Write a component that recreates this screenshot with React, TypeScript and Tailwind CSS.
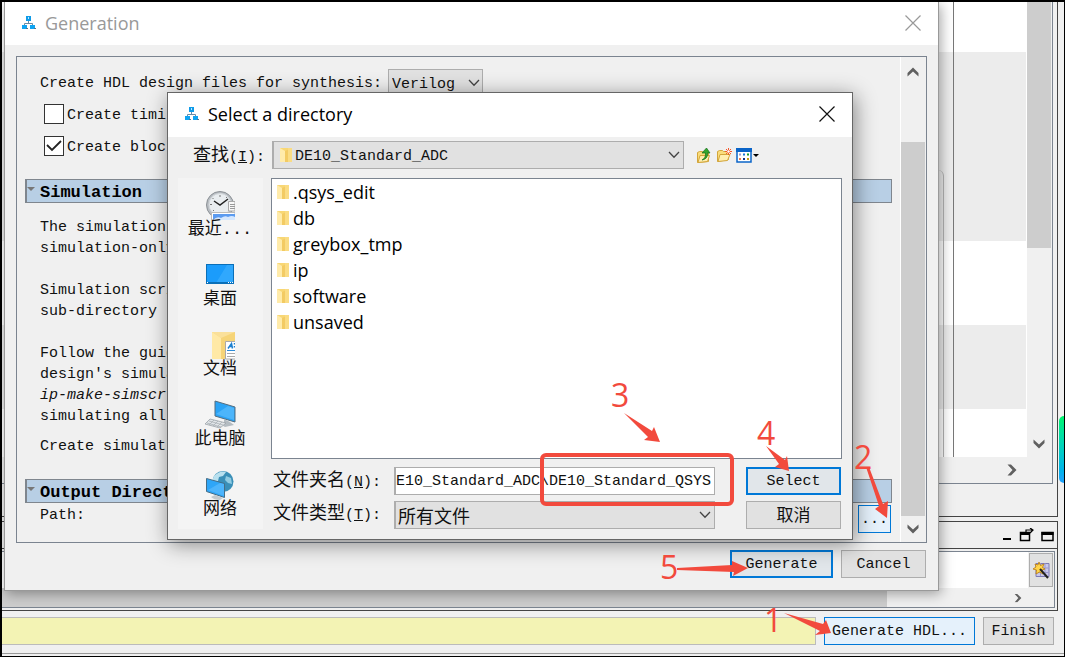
import type { ReactNode } from 'react';

const CJK = "font-['Noto_Sans_CJK_SC',sans-serif]";
const MONO = "font-['Liberation_Mono','Noto_Sans_CJK_SC',monospace]";
const MONO_TEXT = `${MONO} text-[15px] leading-[21px]`;

const folders = ['.qsys_edit', 'db', 'greybox_tmp', 'ip', 'software', 'unsaved'];

function QsysIcon() {
    return (
        <svg width="14" height="14" viewBox="0 0 14 14" className="shrink-0">
            <path d="M6.500 4v4M2.500 10V7.500h8V10" stroke="#6b8ba4" fill="none" />
            <rect x="4" y="0" width="5" height="5" fill="#0f9be8" />
            <rect x="6" y="1" width="1" height="2" fill="#bfe6ff" />
            <rect x="0" y="9" width="5" height="4" fill="#0fa4f2" />
            <rect x="8" y="9" width="5" height="4" fill="#0fa4f2" />
            <path d="M4 12.500h2M12 12.500h2" stroke="#58748a" />
        </svg>
    );
}

function CloseIcon({ color }: { color: string }) {
    return (
        <svg width="16" height="16" viewBox="0 0 16 16" stroke={color} strokeWidth="1.2">
            <path d="M.5 .5l15 15M15.500 .5l-15 15" />
        </svg>
    );
}

function Chevron({ className = '' }: { className?: string }) {
    return (
        <svg width="12" height="8" viewBox="0 0 12 8" className={className} fill="none" stroke="#444" strokeWidth="1.300">
            <path d="M1 1l5 5.200 5-5.200" />
        </svg>
    );
}

function ScrollArrow({ className = '' }: { className?: string }) {
    return (
        <svg width="12" height="10" viewBox="0 0 12 10" className={className} fill="#606060">
            <path d="M.5 .5v3.500L6 9.500 11.500 4V.5L6 5.500z" />
        </svg>
    );
}

function FolderIcon() {
    return (
        <svg width="12" height="14" viewBox="0 0 12 14" className="shrink-0">
            <rect width="12" height="14" fill="#f8d775" />
            <path d="M5 3L12 0v14H5z" fill="#f3cb63" />
            <path d="M8 0h4v14H8z" fill="#fadc84" />
            <path d="M0 0l5 3v11H0z" fill="#ffebaa" />
        </svg>
    );
}

function RecentIcon() {
    return (
        <svg width="30" height="30" viewBox="0 0 30 30">
            <circle cx="15" cy="15" r="13.500" fill="#b8bdc2" stroke="#8c9196" />
            <circle cx="15" cy="14.500" r="11" fill="#e9edf0" stroke="#d2d6da" />
            <path d="M15 5v2M5 14.500h2M7.500 8l1 1M22 7l-1 1M8 21l1-1" stroke="#777" />
            <path d="M9 11l6 4 8-6" stroke="#222" strokeWidth="1.500" fill="none" />
            <path d="M23.500 11.500H30V21h-6.500z" fill="#f8f8f8" stroke="#aaa" />
            <path d="M25 14.500h5M25 16.500h5M25 18.500h5" stroke="#999" />
            <path d="M6.500 22.500H30V30H6.500z" fill="#fff" stroke="#bbb" />
            <path d="M8 24h22v6H8z" fill="#5b9bf0" />
            <path d="M8 30q4-4 8-2 4-3 7-1 4-2 7 0v3z" fill="#d5e7fd" />
        </svg>
    );
}

function DesktopIcon() {
    return (
        <svg width="30" height="30" viewBox="0 0 30 30">
            <rect x="1.500" y="4.500" width="27" height="19" fill="#1b9cfb" stroke="#0a6fb8" />
            <path d="M11 23L22 5h6v18z" fill="#3fb0ff" opacity=".6" />
            <path d="M2 22.500h26" stroke="#0a6fb8" />
            <path d="M2 22.500h1M23 22.500h1M25 22.500h1M27 22.500h1" stroke="#fff" />
        </svg>
    );
}

function DocumentsIcon() {
    return (
        <svg width="30" height="30" viewBox="0 0 30 30">
            <path d="M7 2h24v27H7z" fill="#f6d477" />
            <path d="M16 8l14-6H7z" fill="#fae09a" />
            <path d="M7 2l9 6v21H7z" fill="#ffe9a6" />
            <path d="M20.500 11.500H31V29H20.500z" fill="#fff" stroke="#aaa" />
            <path d="M23 18.500l3.500-5 1 5M24 16.500h3M29.500 13v1.500M29.500 16v1.500" stroke="#1c7fd0" strokeWidth="1.500" fill="none" />
            <path d="M22 20.500h8" stroke="#2b8bd8" />
            <path d="M22 23.500h8M22 26.500h8" stroke="#aaa" />
        </svg>
    );
}

function ComputerIcon() {
    return (
        <svg width="32" height="30" viewBox="0 0 32 30">
            <path d="M11 1l20 6v15l-20-6z" fill="#2ba3f5" stroke="#546d7e" />
            <path d="M12 14L24 6l6 2v12z" fill="#62c2ff" opacity=".6" />
            <path d="M20 19v4l-4 1 5 3 9-2-4-3z" fill="#b4bcc2" />
            <path d="M6 19l16 4-6 5-15-4z" fill="#e1e5e8" stroke="#9aa2a8" strokeWidth=".8" />
            <path d="M5 21l14 4M3 23l14 4M10 20l-5 5M14 21l-5 5M18 22l-5 5" stroke="#a9b0b5" strokeWidth=".8" />
        </svg>
    );
}

function NetworkIcon() {
    return (
        <svg width="30" height="30" viewBox="0 0 30 30">
            <circle cx="18" cy="11.500" r="10.500" fill="#3a8fb7" />
            <path d="M9 6q6-6 12-4l-3 4-4 1-1 4-5 1q-1-3 1-6z" fill="#b9e0ee" />
            <path d="M21 6l5 2 1 6-4-1-3-3z" fill="#8fcbe2" />
            <path d="M1.500 8.500l18 5v14l-18-6z" fill="#2ea6f8" stroke="#456d86" />
            <path d="M3 20L15 13l4 1v12z" fill="#6cc4ff" opacity=".5" />
            <path d="M6 27l4-2 8 3-3 2q-6 0-9-3z" fill="#c3c9cd" />
        </svg>
    );
}

const places: { label: string; icon: ReactNode }[] = [
    { label: '最近...', icon: <RecentIcon /> },
    { label: '桌面', icon: <DesktopIcon /> },
    { label: '文档', icon: <DocumentsIcon /> },
    { label: '此电脑', icon: <ComputerIcon /> },
    { label: '网络', icon: <NetworkIcon /> },
];

function UpFolderIcon() {
    return (
        <svg width="16" height="16" viewBox="0 0 16 16">
            <path d="M1.500 5.500l2-1h3l1 1h5v9l-11 1z" fill="#f9dc7c" stroke="#d3a63b" />
            <path d="M4 8.500h9.500l-2 6-9.500 1z" fill="#ffeeb0" stroke="#d3a63b" />
            <path d="M6 13q4-2 3.500-7H6L10.500 1 14 6h-2.500q.5 6-5.500 7z" fill="#35a52e" stroke="#14701a" strokeWidth=".7" />
        </svg>
    );
}

function NewFolderIcon() {
    return (
        <svg width="16" height="16" viewBox="0 0 16 16">
            <path d="M1.500 4.500l2-1h3l1 1h5v8l-11 2z" fill="#f9dc7c" stroke="#d3a63b" />
            <path d="M4 7.500h10l-2.500 6-9.500 1z" fill="#ffeeb0" stroke="#d3a63b" />
            <path d="M12.500 1v7M9 4.500h7M10 2l5 5M15 2l-5 5" stroke="#f5562b" />
            <circle cx="12.500" cy="4.500" r="1.200" fill="#fff" />
        </svg>
    );
}

function ViewMenuIcon() {
    return (
        <svg width="23" height="16" viewBox="0 0 23 16">
            <rect x="1" y="2" width="14" height="13" fill="#fff" stroke="#0a64c8" strokeWidth="1.500" />
            <path d="M0 1h16v4H0z" fill="#0a64c8" />
            <path d="M3 7.500h2" stroke="#9a9ad0" strokeWidth="2" />
            <path d="M7 7.500h2" stroke="#1877d8" strokeWidth="2" />
            <path d="M11 7.500h2" stroke="#159a25" strokeWidth="2" />
            <path d="M3 12h2" stroke="#f07a4a" strokeWidth="2" />
            <path d="M7 12h2" stroke="#10328c" strokeWidth="2" />
            <path d="M11 12h2" stroke="#c49a10" strokeWidth="2" />
            <path d="M17 7h6l-3 3z" fill="#000" />
        </svg>
    );
}

function WandIcon() {
    return (
        <svg width="17" height="17" viewBox="0 0 17 17">
            <path d="M3 1.500h13v13H3z" fill="#c9c8ea" stroke="#7c7ab5" />
            <path d="M3 6h13M3 10.500h13M7.500 1v13M12 1v13" stroke="#9c9ace" />
            <path d="M6 0l1.500 3.500L11 2 9.500 5.500 12 7 9 8l1 4-3.500-2L3 12l.5-4L0 7l3-2-1-3 3 1z" fill="#ffd54a" stroke="#b87a10" strokeWidth=".8" />
            <path d="M7 7l8 9" stroke="#222" strokeWidth="2" />
        </svg>
    );
}

function TitleBar({ title, active }: { title: string; active: boolean }) {
    return (
        <header className={`flex items-center bg-white px-[17px] pb-[2px] ${active ? 'h-[44px]' : 'h-[43px]'}`}>
            <QsysIcon />
            <h2 className={`ml-[9px] flex-1 font-['Open_Sans',sans-serif] text-[18px] leading-6 ${active ? 'text-black' : 'text-[#999]'}`}>
                {title}
            </h2>
            <button type="button" aria-label={`Close ${title}`}>
                <CloseIcon color={active ? '#111' : '#999'} />
            </button>
        </header>
    );
}

function SectionHeader({ title }: { title: string }) {
    return (
        <h3 className={`flex h-6 items-center overflow-hidden border border-l-2 border-[#7f868e] bg-[#b8cfe5] text-[17px] leading-5 font-bold whitespace-nowrap text-black ${MONO}`}>
            <svg width="8" height="4" viewBox="0 0 8 4" className="mb-1 shrink-0">
                <path d="M0 0h8L4 4z" fill="#777" />
            </svg>
            <span className="ml-[5px] pt-1">{title}</span>
        </h3>
    );
}

function Check({ id, label, checked }: { id: string; label: string; checked: boolean }) {
    return (
        <div className="flex h-8 items-center pl-[19px]">
            <span className="relative flex">
                <input id={id} type="checkbox" defaultChecked={checked} className="peer h-[20px] w-[20px] appearance-none border border-[#333] bg-white" />
                <svg width="16" height="12" viewBox="0 0 16 12" className="pointer-events-none absolute top-1 left-[2px] hidden peer-checked:block">
                    <path d="M1 5l5 5 9-9" fill="none" stroke="#222" strokeWidth="1.800" />
                </svg>
            </span>
            <label htmlFor={id} className="ml-[3px] pt-[2px] whitespace-nowrap">{label}</label>
        </div>
    );
}

function MainWindow() {
    return (
        <main className="flex min-h-screen flex-col border-t-2 border-r border-b border-l-2 border-black bg-[#f0f0f0]">
            <section className="mr-[6px] flex flex-1 flex-col border-r border-b border-[#444] pr-1 pb-8">
                <div className="flex flex-1 flex-col border-r border-b border-[#7b8490]">
                    <div className="flex flex-1">
                        <div className="flex flex-1 justify-end bg-[linear-gradient(#fff_0_50px,#ececec_50px_239px,#fff_239px_323px,#ececec_323px_407px,#fff_407px)]">
                            <div className="mt-[168px] w-[10px] rounded-tr-md border-r border-[#b4b4b4]" />
                            <div className="mr-[72px] w-[10px] border-r border-[#777]" />
                        </div>
                        <div className="flex w-[26px] flex-col justify-between border-l border-white">
                            <div className="mr-px h-[246px] bg-[#cdcdcd]" />
                            <ScrollArrow className="mr-px mb-2 self-center" />
                        </div>
                    </div>
                    <div className="flex h-[26px] items-center justify-end pr-[34px]">
                        <ScrollArrow className="-rotate-90" />
                    </div>
                </div>
            </section>

            <section className="mt-1 mr-[6px] border-t border-r border-b border-[#444] pb-[2px]">
                <div className="flex h-[27px] items-center justify-end border-b border-[#444] pr-[3px]">
                    <svg width="52" height="14" viewBox="0 0 52 14" fill="none" stroke="#000" strokeWidth="1.500">
                        <path d="M1 11h8" strokeWidth="2" />
                        <path d="M18.500 4.500h9v8h-9z" />
                        <path d="M18 5.500h10" strokeWidth="3" />
                        <path d="M24 4V2h6M28 0l3 2-3 3" strokeWidth="1.200" />
                        <path d="M40 4.500h11v8H40z" />
                        <path d="M39.500 5.500h12" strokeWidth="3" />
                    </svg>
                </div>
                <div className="mt-[2px] mr-[2px] border-t border-r border-b border-[#7b8490]">
                    <div className="flex h-[36px]">
                        <div className="flex-1 bg-white" />
                        <button type="button" aria-label="Edit table" className="m-px flex w-[24px] items-center justify-center border border-[#adadad] bg-[#e1e1e1]">
                            <WandIcon />
                        </button>
                    </div>
                    <div className="flex h-[19px] items-center pr-[30px]">
                        <div className="h-full flex-1 bg-[#cdcdcd]" />
                        <ScrollArrow className="ml-[125px] -rotate-90 scale-75" />
                    </div>
                </div>
            </section>

            <footer className={`mr-[10px] mb-[2px] flex h-[43px] items-start gap-2 pt-[6px] ${MONO_TEXT}`}>
                <div className="h-[28px] flex-1 border-y border-r border-[#bbb] bg-[#f3f3b4]" />
                <button type="button" className="h-[28px] w-[151px] border border-[#0078d7] bg-[#e5f1fb]">Generate HDL...</button>
                <button type="button" className="h-[28px] w-[71px] border border-[#adadad] bg-[#e1e1e1]">Finish</button>
            </footer>
            <div className="-mt-[3px] mb-[2px] border-t border-[#999]" />
        </main>
    );
}

function GenerationWindow() {
    return (
        <section className={`absolute top-[2px] left-1 w-[935px] border-r border-b border-l border-[#999] bg-[#f0f0f0] shadow-[2px_3px_12px_rgba(0,0,0,0.35)] ${MONO_TEXT}`}>
            <TitleBar title="Generation" active={false} />
            <div className="mx-[11px] mt-[11px] flex border border-[#7b8490]">
                <div className="flex-1 pt-[12px] pr-[8px] pb-[9px] pl-2">
                    <div className="flex h-[28px] items-center pl-[15px]">
                        <label htmlFor="hdl">Create HDL design files for synthesis:</label>
                        <span className="relative ml-[6px] flex">
                            <select id="hdl" className="h-[28px] w-[95px] appearance-none border border-[#adadad] bg-[#e1e1e1] pt-[2px] pl-[3px]">
                                <option>Verilog</option>
                            </select>
                            <Chevron className="pointer-events-none absolute top-[10px] right-[3px]" />
                        </span>
                    </div>
                    <div className="mt-px mb-[17px]">
                        <Check id="timing" label="Create timi" checked={false} />
                        <Check id="block" label="Create bloc" checked />
                    </div>
                    <SectionHeader title="Simulation" />
                    <div className="mt-[14px] pl-[15px] whitespace-pre">
                        <p>The simulation<br />simulation-only</p>
                        <p className="mt-[21px]">Simulation scri<br />sub-directory</p>
                        <p className="mt-[21px]">Follow the guid<br />design's simula<br /><em>ip-make-simscr</em><br />simulating all</p>
                        <p className="mt-[9px]">Create simulat</p>
                    </div>
                    <div className="mt-[22px]">
                        <SectionHeader title="Output Directory" />
                    </div>
                    <div className="mt-[2px] flex items-start justify-between pr-px pl-[15px]">
                        <span>Path:</span>
                        <button type="button" aria-label="Browse" className="h-[28px] w-[33px] border border-[#0078d7] bg-[#e5f1fb]">...</button>
                    </div>
                </div>
                <div className="flex w-[26px] flex-col items-center border-l border-white pr-px">
                    <ScrollArrow className="my-[10px] rotate-180" />
                    <div className="mt-[55px] w-6 flex-1 bg-[#cdcdcd]" />
                    <ScrollArrow className="my-[8px]" />
                </div>
            </div>
            <div className="flex justify-end gap-2 pt-[7px] pr-3 pb-3">
                <button type="button" className="h-[28px] w-[103px] border-2 border-[#0078d7] bg-[#e1e6ea]">Generate</button>
                <button type="button" className="h-[28px] w-[85px] border border-[#adadad] bg-[#e1e1e1]">Cancel</button>
            </div>
        </section>
    );
}

function DirectoryDialog() {
    return (
        <section role="dialog" aria-label="Select a directory" className={`absolute top-[92px] left-[167px] w-[686px] border border-[#666] bg-[#f0f0f0] shadow-[2px_4px_20px_rgba(0,0,0,0.45)] ${MONO_TEXT}`}>
            <TitleBar title="Select a directory" active />
            <div className="flex h-[36px] items-center pl-[25px]">
                <label htmlFor="look" className="w-[79px] pt-1">
                    <span className="text-[18px]">查找</span>(<u>I</u>):
                </label>
                <span className="relative flex items-center">
                    <select id="look" className="h-[28px] w-[412px] appearance-none border border-l-2 border-[#adadad] bg-[#e1e1e1] pt-[2px] pl-[21px]">
                        <option>DE10_Standard_ADC</option>
                    </select>
                    <span className="pointer-events-none absolute left-2"><FolderIcon /></span>
                    <Chevron className="pointer-events-none absolute right-1" />
                </span>
                <div className="ml-3 flex gap-1">
                    <button type="button" aria-label="Up one level"><UpFolderIcon /></button>
                    <button type="button" aria-label="New folder"><NewFolderIcon /></button>
                    <button type="button" aria-label="View menu"><ViewMenuIcon /></button>
                </div>
            </div>
            <div className="flex gap-2 pt-[5px] pr-[10px] pb-[10px] pl-[10px]">
                <nav className="w-[85px] bg-[#f4f4f4]">
                    {places.map((place) => (
                        <button key={place.label} type="button" className="flex h-[70px] w-full flex-col items-center pt-3 pr-px">
                            {place.icon}
                            <span className={`text-[17px] leading-5 ${MONO}`}>{place.label}</span>
                        </button>
                    ))}
                </nav>
                <div className="flex-1">
                    <ul className="h-[281px] border border-[#7b8490] bg-white pl-[5px] font-['Open_Sans',sans-serif] text-[18px] leading-[26px] text-black">
                        {folders.map((name) => (
                            <li key={name} className="flex items-center gap-1">
                                <FolderIcon />
                                {name}
                            </li>
                        ))}
                    </ul>
                    <div className="mt-2 grid grid-cols-[123px_321px_126px] items-center gap-y-[6px]">
                        <label htmlFor="folder" className="pt-[2px] pl-[2px]">
                            <span className="text-[18px]">文件夹名</span>(<u>N</u>):
                        </label>
                        <input id="folder" type="text" defaultValue="E10_Standard_ADC\DE10_Standard_QSYS" className="h-[28px] border border-l-2 border-[#adadad] bg-white pt-px" />
                        <button type="button" className="h-[28px] w-[95px] justify-self-end border-2 border-[#0078d7] bg-[#e1e6ea]">Select</button>
                        <label htmlFor="type" className="pl-[2px]">
                            <span className="text-[18px]">文件类型</span>(<u>T</u>):
                        </label>
                        <span className="relative flex items-center">
                            <select id="type" className={`h-[28px] w-full appearance-none border border-l-2 border-[#adadad] bg-[#e1e1e1] pl-[2px] text-[18px] ${CJK}`}>
                                <option>所有文件</option>
                            </select>
                            <Chevron className="pointer-events-none absolute right-1" />
                        </span>
                        <button type="button" className={`flex h-[28px] w-[95px] justify-center justify-self-end border border-[#adadad] bg-[#e1e1e1] text-[17px] leading-6 ${CJK}`}>取消</button>
                    </div>
                </div>
            </div>
        </section>
    );
}

// numbered steps drawn over the windows
function Steps() {
    return (
        <svg width="1065" height="657" viewBox="0 0 1065 657" className="pointer-events-none absolute top-0 left-0 font-['Open_Sans',sans-serif] text-[32px]" fill="#f24a3d">
            <rect x="542" y="455" width="190" height="49" rx="4" fill="none" stroke="#f24a3d" strokeWidth="4" />
            <path d="M624 413L652 431L654 427L660 442L644 440L648 437Z" />
            <path d="M766 446L785 460L787 456L789 471L775 467L779 464Z" />
            <path d="M866 467L869 467L883 504L888 501L887 518L875 509L879 506Z" />
            <path d="M677 568L732 565L732 561L748 568L733 576L734 572L677 570Z" />
            <path d="M784 613L823 624L826 620L831 633L815 635L820 631Z" />
            <text x="764" y="632">1</text>
            <text x="854" y="469">2</text>
            <text x="611" y="407">3</text>
            <text x="757" y="445">4</text>
            <text x="660" y="579">5</text>
        </svg>
    );
}

export default function App() {
    return (
        <div className="relative overflow-hidden text-[#111]">
            <MainWindow />
            <GenerationWindow />
            <DirectoryDialog />
            <Steps />
            <div className="absolute top-[416px] right-px h-[67px] w-[5px] rounded-l-md bg-linear-to-b from-[#00f56a] to-[#1ea0ff]" />
        </div>
    );
}
